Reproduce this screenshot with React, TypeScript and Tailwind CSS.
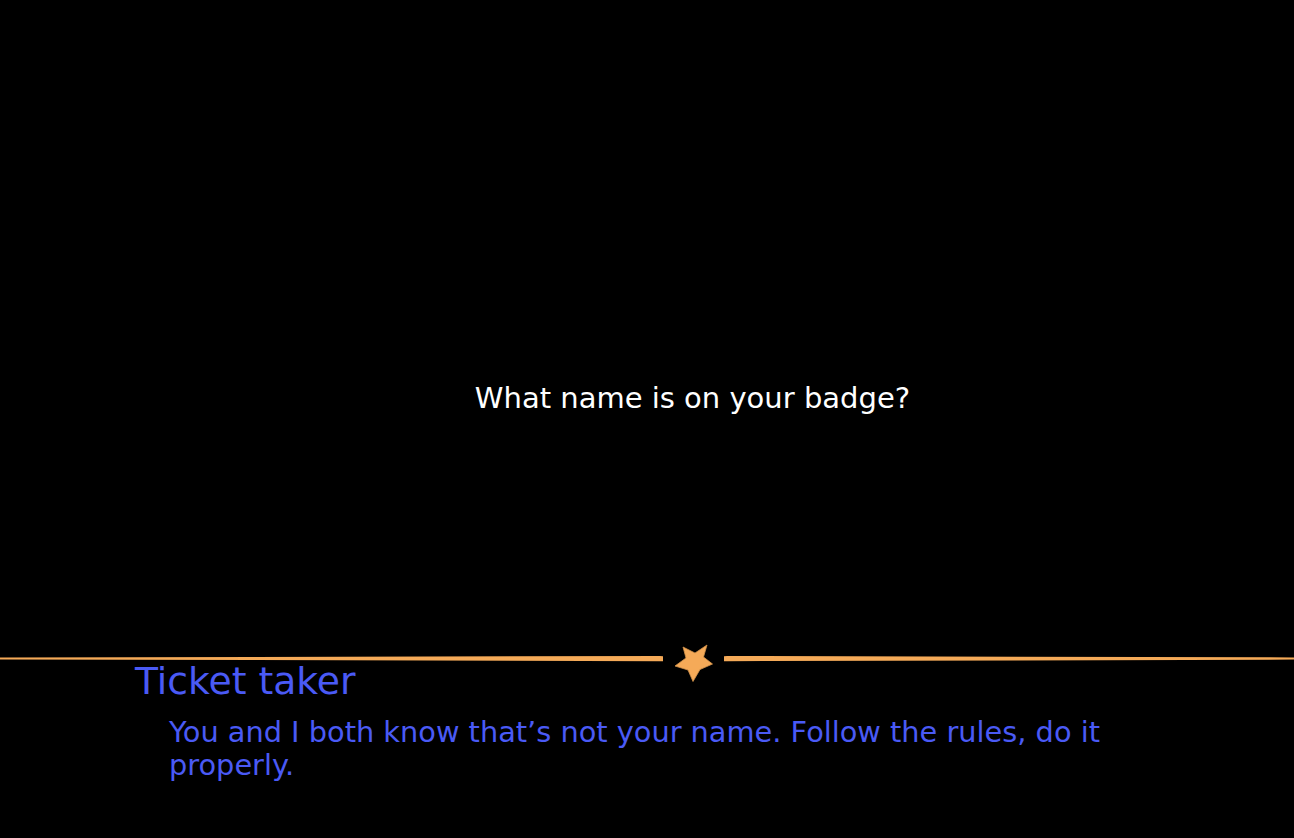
import React from 'react';

// Tapered rule with a star in the middle, sits on top of the dialogue box
function StarDivider() {
  return (
    <svg viewBox="0 0 1294 46" className="block w-full h-[46px]" preserveAspectRatio="none">
      <path d="M0 19.6 L660 18 L663 18.2 L663 23.2 L660 23.2 L0 21.4 Z" fill="#f5aa58" />
      <path d="M724 18.2 L727 18 L1294 19.4 L1294 21.6 L727 23.2 L724 23.2 Z" fill="#f5aa58" />
      <path
        d="M683 9 L695 15 L707 7 L703.5 19 L712.5 26 L700 31.5 L693 43.5 L688 32 L675 28 L686 20 Z"
        fill="#f5aa58"
        stroke="#d2924a"
        strokeWidth="0.8"
        strokeLinejoin="round"
      />
    </svg>
  );
}

export default function App() {
  return (
    <div
      className="h-screen w-full bg-black flex flex-col overflow-hidden"
      style={{ fontFamily: '"DejaVu Sans", sans-serif' }}
    >
      {/* Prompt */}
      <div className="flex-1 flex items-center justify-center pl-[91px] pt-[158px]">
        <p className="text-white text-[29px] leading-[29px]">What name is on your badge?</p>
      </div>

      {/* Dialogue box */}
      <div className="h-[200px] flex flex-col">
        <StarDivider />
        <div className="px-[135px] -mt-[26px]">
          <h2 className="text-[#4a5af5] text-[37.7px] leading-[46px]">Ticket taker</h2>
          <p className="text-[#4a5af5] text-[28.8px] leading-[33px] pl-[34px] mt-[12px]">
            You and I both know that’s not your name. Follow the rules, do it properly.
          </p>
        </div>
      </div>
    </div>
  );
}
